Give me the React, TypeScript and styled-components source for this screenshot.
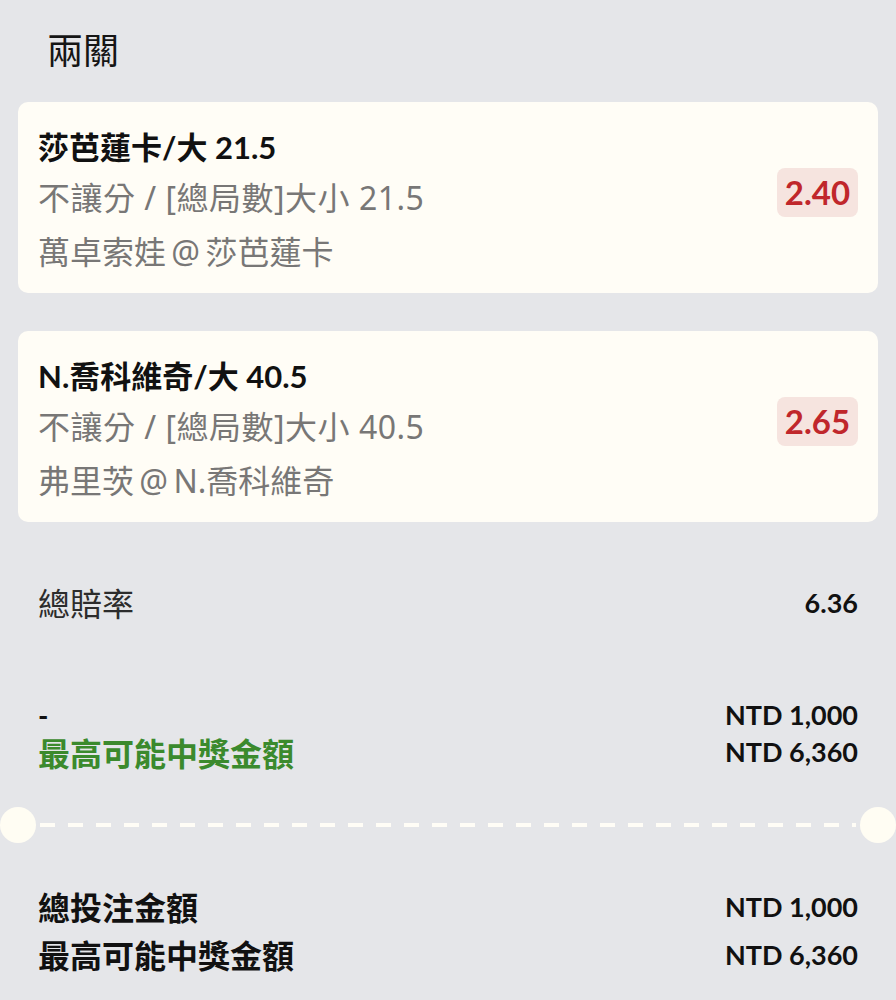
import styled, { createGlobalStyle } from 'styled-components';

const GlobalStyle = createGlobalStyle`
  body {
    margin: 0;
    background: #e5e6e9;
    font-family: "Lato", "Noto Sans CJK TC", sans-serif;
    color: #111;
  }
`;

const legs = [
  {
    title: '莎芭蓮卡/大 21.5',
    market: '不讓分 / [總局數]大小 21.5',
    match: '萬卓索娃 @ 莎芭蓮卡',
    odds: '2.40',
  },
  {
    title: 'N.喬科維奇/大 40.5',
    market: '不讓分 / [總局數]大小 40.5',
    match: '弗里茨 @ N.喬科維奇',
    odds: '2.65',
  },
];

function App() {
  return (
    <>
      <GlobalStyle />
      <Page>
        <Heading>兩關</Heading>

        <CardList>
          {legs.map((leg) => (
            <LegCard key={leg.title}>
              <LegInfo>
                <LegTitle>{leg.title}</LegTitle>
                <LegSub>{leg.market}</LegSub>
                <LegSub $tight>{leg.match}</LegSub>
              </LegInfo>
              <OddsBadge>{leg.odds}</OddsBadge>
            </LegCard>
          ))}
        </CardList>

        <TotalOddsRow>
          <PlainLabel>總賠率</PlainLabel>
          <Amount>6.36</Amount>
        </TotalOddsRow>

        <SummaryBlock>
          <SummaryRow>
            <Dash>-</Dash>
            <Amount>NTD 1,000</Amount>
          </SummaryRow>
          <SummaryRow>
            <WinLabel>最高可能中獎金額</WinLabel>
            <Amount>NTD 6,360</Amount>
          </SummaryRow>
        </SummaryBlock>

        <Divider>
          <Notch />
          <DashLine />
          <Notch />
        </Divider>

        <TotalBlock>
          <TotalRow>
            <BoldLabel>總投注金額</BoldLabel>
            <Amount>NTD 1,000</Amount>
          </TotalRow>
          <TotalRow>
            <BoldLabel>最高可能中獎金額</BoldLabel>
            <Amount>NTD 6,360</Amount>
          </TotalRow>
        </TotalBlock>
      </Page>
    </>
  );
}

const Page = styled.div`
  width: 896px;
  height: 1000px;
  box-sizing: border-box;
  padding-top: 26px;
  overflow: hidden;
`;

const Heading = styled.h1`
  margin: 0 0 32px 47px;
  font-family: "Noto Sans CJK TC", sans-serif;
  font-size: 36px;
  line-height: 44px;
  font-weight: 400;
  color: #151515;
`;

const CardList = styled.div`
  display: flex;
  flex-direction: column;
  gap: 38px;
  padding: 0 18px;
`;

const LegCard = styled.div`
  display: flex;
  align-items: center;
  justify-content: space-between;
  background: #fffdf6;
  border-radius: 10px;
  padding: 21px 20px 14px;
`;

const LegInfo = styled.div`
  display: flex;
  flex-direction: column;
`;

const LegTitle = styled.div`
  font-family: "Lato", "Noto Sans CJK TC", sans-serif;
  font-size: 31px;
  line-height: 48px;
  font-weight: 700;
  color: #111;
`;

const LegSub = styled.div<{ $tight?: boolean }>`
  font-family: "Noto Sans", "Noto Sans CJK TC", sans-serif;
  font-size: 32px;
  line-height: 54px;
  font-weight: 400;
  letter-spacing: ${(p) => (p.$tight ? '0' : '0.5px')};
  word-spacing: ${(p) => (p.$tight ? '-3px' : '0')};
  color: #787776;
`;

const OddsBadge = styled.div`
  margin-top: -18px;
  min-width: 81px;
  height: 49px;
  box-sizing: border-box;
  display: flex;
  align-items: center;
  justify-content: center;
  background: #f6e4df;
  border-radius: 8px;
  font-family: "Lato", sans-serif;
  font-size: 33px;
  font-weight: 700;
  color: #c0272b;
`;

const Row = styled.div`
  display: flex;
  align-items: center;
  justify-content: space-between;
  padding: 0 38px;
`;

const TotalOddsRow = styled(Row)`
  margin-top: 58px;
  height: 44px;
`;

const PlainLabel = styled.span`
  font-family: "Noto Sans CJK TC", sans-serif;
  font-size: 32px;
  color: #2c2c2c;
`;

const Amount = styled.span`
  font-family: "Lato", sans-serif;
  font-size: 27px;
  font-weight: 700;
  color: #111;
`;

const SummaryBlock = styled.div`
  margin-top: 72px;
  display: flex;
  flex-direction: column;
`;

const SummaryRow = styled(Row)`
  height: 37px;
`;

const Dash = styled.span`
  font-family: "Lato", sans-serif;
  font-size: 28px;
  font-weight: 700;
`;

const WinLabel = styled.span`
  font-family: "Noto Sans CJK TC", sans-serif;
  font-size: 32px;
  font-weight: 700;
  color: #3b8a2d;
`;

const Divider = styled.div`
  margin-top: 37px;
  display: flex;
  align-items: center;
  height: 36px;
`;

const Notch = styled.div`
  width: 36px;
  height: 36px;
  border-radius: 50%;
  background: #fffdf3;
  flex-shrink: 0;
`;

const DashLine = styled.div`
  flex: 1;
  height: 4px;
  margin: 0 4px;
  background: repeating-linear-gradient(
    to right,
    #fffdf6 0 15px,
    transparent 15px 28px
  );
`;

const TotalBlock = styled.div`
  margin-top: 39px;
  display: flex;
  flex-direction: column;
`;

const TotalRow = styled(Row)`
  height: 48px;
`;

const BoldLabel = styled.span`
  font-family: "Noto Sans CJK TC", sans-serif;
  font-size: 32px;
  font-weight: 700;
  color: #111;
`;

export default App;
